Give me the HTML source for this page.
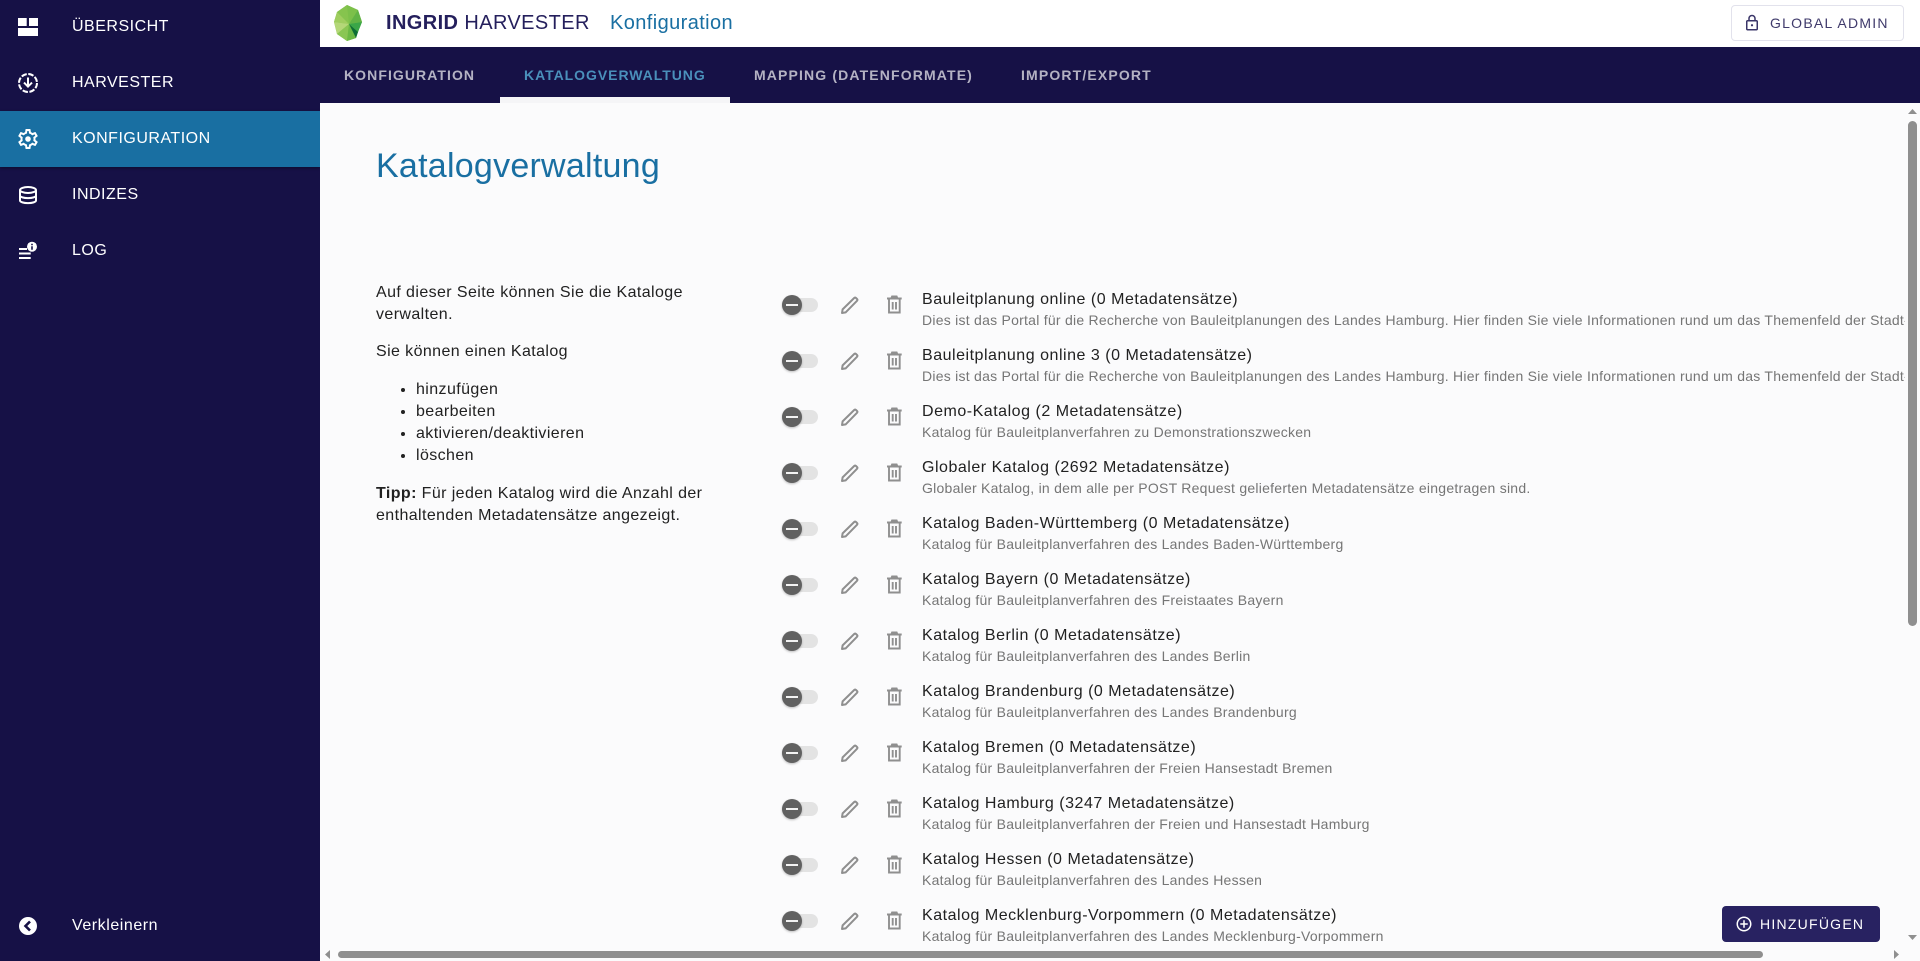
<!DOCTYPE html>
<html lang="de">
<head>
<meta charset="utf-8">
<title>InGrid Harvester</title>
<style>
*{box-sizing:border-box}
html,body{margin:0;padding:0;width:1920px;height:961px;overflow:hidden;background:#fbfbfc;font-family:"Liberation Sans",Arial,sans-serif;color:#212121}
.abs{position:absolute}
#side{position:absolute;left:0;top:0;width:320px;height:961px;background:#161146}
.nav{position:absolute;left:0;width:320px;height:56px;color:#fff;font-size:16px;line-height:56px;padding-left:72px;letter-spacing:.5px;white-space:nowrap}
.nav svg{position:absolute;left:16px;top:16px;width:24px;height:24px;fill:#fff}
.nav.on{background:#196fa2;box-shadow:0 1px 3px rgba(0,0,0,.35)}
#head{position:absolute;left:320px;top:0;width:1600px;height:47px;background:#fff}
#brand{position:absolute;left:66px;top:0;line-height:47px;font-size:20px;letter-spacing:.4px;color:#241f5c;white-space:nowrap}
#crumb{position:absolute;left:290px;top:0;line-height:47px;font-size:20px;letter-spacing:.4px;color:#196fa2;white-space:nowrap}
#admin{position:absolute;left:1411px;top:5px;width:173px;height:36px;border:1px solid #e2e2ec;border-radius:4px;background:#fff;color:#3f3a6b;font-size:14px;letter-spacing:1.25px;line-height:34px;padding-left:38px;white-space:nowrap}
#admin svg{position:absolute;left:11px;top:8px;width:18px;height:18px;fill:#3a3568}
#tabs{position:absolute;left:320px;top:47px;width:1600px;height:56px;background:#161146}
.tab{position:absolute;top:0;line-height:56px;font-size:14px;font-weight:bold;color:rgba(255,255,255,.68);white-space:nowrap}
#ind{position:absolute;left:180px;top:50px;width:230px;height:6px;background:#f5f5f7}
#main{position:absolute;left:320px;top:103px;width:1600px;height:858px;background:#fbfbfc;overflow:hidden}
h1{position:absolute;left:56px;top:43px;margin:0;font-size:34px;line-height:40px;font-weight:normal;color:#196fa2;letter-spacing:.25px;white-space:nowrap}
#intro{position:absolute;left:56px;top:179px;width:340px;font-size:16px;line-height:22px;color:#212121;letter-spacing:.4px}
#intro p{margin:0 0 15px}
#intro ul{margin:0 0 16px;padding-left:40px}
.row{position:absolute;left:0;width:1600px;height:56px}
.tr{position:absolute;left:462px;top:15px;width:36px;height:14px;border-radius:7px;background:#e3e3e3}
.th{position:absolute;left:462px;top:12px;width:20px;height:20px;border-radius:50%;background:#616161;box-shadow:0 1px 2px rgba(0,0,0,.25)}
.th:after{content:"";position:absolute;left:4px;top:9px;width:12px;height:2px;background:#f2f2f2}
.ed{position:absolute;left:518px;top:10px;width:24px;height:24px}
.de{position:absolute;left:562px;top:10px;width:24px;height:24px}
.t1{position:absolute;left:602px;top:7px;font-size:16px;line-height:20px;letter-spacing:.52px;color:#212121;white-space:nowrap}
.t2{position:absolute;left:602px;top:28px;width:983px;overflow:hidden;font-size:14px;line-height:18px;letter-spacing:.25px;color:#757575;white-space:nowrap}
#add{position:absolute;left:1722px;top:906px;width:158px;height:36px;border-radius:4px;background:#282261;color:#fff;font-size:14px;letter-spacing:1.25px;line-height:36px;padding-left:38px;white-space:nowrap}
#add svg{position:absolute;left:13px;top:9px;width:18px;height:18px;fill:#fff}
.sb{position:absolute;background:#8f8f8f}
</style>
</head>
<body>
<svg width="0" height="0" style="position:absolute">
  <symbol id="pen" viewBox="0 0 24 24"><path d="M4 20l.6-3.600L16.200 5a1.300 1.300 0 0 1 1.800 0l1 1a1.300 1.300 0 0 1 0 1.800L7.600 19.400z" fill="none" stroke="#8f8f8f" stroke-width="2" stroke-linejoin="round"/></symbol>
  <symbol id="bin" viewBox="0 0 24 24"><path d="M5 5.500h14.700M9.500 5l.6-1.500h4.500l.6 1.500M7 6v13.500h10.700V6M10.700 9v7.500M14 9v7.500" fill="none" stroke="#8f8f8f" stroke-width="1.900"/></symbol>
</svg>

<div id="side">
  <div class="nav" style="top:-1px">ÜBERSICHT
    <svg viewBox="0 0 24 24" style="top:17px"><path d="M2 2h8.700v8H2zM13 2h9v8h-9zM2 12h20v8H2z"/></svg></div>
  <div class="nav" style="top:55px">HARVESTER
    <svg viewBox="0 0 24 24"><circle cx="12" cy="12" r="9" fill="none" stroke="#fff" stroke-width="2" stroke-dasharray="5.500 1.570"/><path d="M11 6.500h2v6.700l2.300-2.300 1.400 1.400-4.700 4.700-4.700-4.700 1.400-1.400 2.300 2.300z"/></svg></div>
  <div class="nav on" style="top:111px">KONFIGURATION
    <svg viewBox="0 0 24 24"><path d="M19.43 12.98c.04-.32.07-.64.07-.98 0-.34-.03-.66-.07-.98l2.11-1.65c.19-.15.24-.42.12-.64l-2-3.46c-.09-.16-.26-.25-.44-.25-.06 0-.12.01-.17.03l-2.49 1c-.52-.4-1.08-.73-1.69-.98l-.38-2.65C14.46 2.18 14.25 2 14 2h-4c-.25 0-.46.18-.49.42l-.38 2.65c-.61.25-1.17.59-1.69.98l-2.49-1c-.06-.02-.12-.03-.18-.03-.17 0-.34.09-.43.25l-2 3.46c-.13.22-.07.49.12.64l2.11 1.65c-.04.32-.07.65-.07.98 0 .33.03.66.07.98l-2.11 1.65c-.19.15-.24.42-.12.64l2 3.46c.09.16.26.25.44.25.06 0 .12-.01.17-.03l2.49-1c.52.4 1.08.73 1.69.98l.38 2.65c.03.24.24.42.49.42h4c.25 0 .46-.18.49-.42l.38-2.65c.61-.25 1.17-.59 1.69-.98l2.49 1c.06.02.12.03.18.03.17 0 .34-.09.43-.25l2-3.46c.12-.22.07-.49-.12-.64l-2.11-1.65zm-1.98-1.71c.04.31.05.52.05.73 0 .21-.02.43-.05.73l-.14 1.13.89.7 1.08.84-.7 1.21-1.27-.51-1.04-.42-.9.68c-.43.32-.84.56-1.25.73l-1.06.43-.16 1.13-.2 1.35h-1.4l-.19-1.35-.16-1.13-1.06-.43c-.43-.18-.83-.41-1.23-.71l-.91-.7-1.06.43-1.27.51-.7-1.21 1.08-.84.89-.7-.14-1.13c-.03-.31-.05-.54-.05-.74s.02-.43.05-.73l.14-1.13-.89-.7-1.08-.84.7-1.21 1.27.51 1.04.42.9-.68c.43-.32.84-.56 1.25-.73l1.06-.43.16-1.13.2-1.35h1.39l.19 1.35.16 1.13 1.06.43c.43.18.83.41 1.23.71l.91.7 1.06-.43 1.27-.51.7 1.21-1.07.85-.89.7.14 1.13zM12 9.200a2.800 2.800 0 1 0 0 5.600 2.800 2.800 0 0 0 0-5.600z"/></svg></div>
  <div class="nav" style="top:167px">INDIZES
    <svg viewBox="0 0 24 24"><g fill="none" stroke="#fff" stroke-width="2"><ellipse cx="12" cy="7" rx="8" ry="3"/><path d="M4 7v10.500c0 1.500 3.600 2.600 8 2.600s8-1.100 8-2.600V7M4 12.500c0 1.500 3.600 2.600 8 2.600s8-1.100 8-2.600"/></g></svg></div>
  <div class="nav" style="top:223px">LOG
    <svg viewBox="0 0 24 24"><path d="M3 9h8v2H3zM3 13.500h11.700v2H3zM3 18h11.700v2H3z"/><circle cx="16" cy="7.700" r="5"/><path d="M15.200 7.200h1.600v3.600h-1.600zM15.200 4.800h1.600v1.500h-1.600z" fill="#161146"/></svg></div>
  <div class="nav" style="top:898px;letter-spacing:.55px">Verkleinern
    <svg viewBox="0 0 24 24"><path d="M12 3a9 9 0 1 0 0 18 9 9 0 0 0 0-18z"/><path d="M14 7.500l-4.500 4.500 4.500 4.500" fill="none" stroke="#161146" stroke-width="2.600"/></svg></div>
</div>

<div id="head">
  <svg class="abs" style="left:14px;top:5px" width="28" height="36" viewBox="0 0 28 36">
    <polygon points="13,0 24,5 28,17 24,27 22,33 13,36 3,29 0,17 3,7" fill="#7cc04a"/>
    <polygon points="13,0 24,5 15,19" fill="#7cc04a"/>
    <polygon points="24,5 28,17 15,19" fill="#62b345"/>
    <polygon points="3,7 13,0 15,19" fill="#86c44e"/>
    <polygon points="0,17 3,7 15,19" fill="#9fcd5f"/>
    <polygon points="0,17 15,19 3,29" fill="#b4d778"/>
    <polygon points="3,29 15,19 13,36" fill="#8ac653"/>
    <polygon points="13,36 15,19 22,33" fill="#6cb944"/>
    <polygon points="15,19 28,17 24,27" fill="#3aa648"/>
    <polygon points="15,19 24,27 22,33" fill="#0d6e35"/>
  </svg>
  <div id="brand"><b>INGRID</b> HARVESTER</div>
  <div id="crumb">Konfiguration</div>
  <div id="admin"><svg viewBox="0 0 24 24"><path d="M18 8h-1V6c0-2.760-2.240-5-5-5S7 3.240 7 6v2H6c-1.100 0-2 .9-2 2v10c0 1.100.9 2 2 2h12c1.100 0 2-.9 2-2V10c0-1.100-.9-2-2-2zM9 6c0-1.660 1.340-3 3-3s3 1.340 3 3v2H9V6zm9 14H6V10h12v10zm-6-3.500a1.500 1.500 0 1 0 0-3 1.500 1.500 0 0 0 0 3z"/></svg>GLOBAL ADMIN</div>
</div>

<div id="tabs">
  <div class="tab" style="left:24px;letter-spacing:1.07px">KONFIGURATION</div>
  <div class="tab" style="left:204px;letter-spacing:.96px;color:#4a90bb">KATALOGVERWALTUNG</div>
  <div class="tab" style="left:434px;letter-spacing:1.14px">MAPPING (DATENFORMATE)</div>
  <div class="tab" style="left:701px;letter-spacing:1.15px">IMPORT/EXPORT</div>
  <div id="ind"></div>
</div>

<div id="main">
  <h1>Katalogverwaltung</h1>
  <div id="intro">
    <p>Auf dieser Seite können Sie die Kataloge verwalten.</p>
    <p style="margin-bottom:16px">Sie können einen Katalog</p>
    <ul><li>hinzufügen</li><li>bearbeiten</li><li>aktivieren/deaktivieren</li><li>löschen</li></ul>
    <p><b>Tipp:</b> Für jeden Katalog wird die Anzahl der enthaltenden Metadatensätze angezeigt.</p>
  </div>

  <div class="row" style="top:180px"><div class="tr"></div><div class="th"></div><svg class="ed"><use href="#pen"/></svg><svg class="de"><use href="#bin"/></svg><div class="t1">Bauleitplanung online (0 Metadatensätze)</div><div class="t2">Dies ist das Portal für die Recherche von Bauleitplanungen des Landes Hamburg. Hier finden Sie viele Informationen rund um das Themenfeld der Stadt- und Landschaftsplanung in Hamburg.</div></div>
  <div class="row" style="top:236px"><div class="tr"></div><div class="th"></div><svg class="ed"><use href="#pen"/></svg><svg class="de"><use href="#bin"/></svg><div class="t1">Bauleitplanung online 3 (0 Metadatensätze)</div><div class="t2">Dies ist das Portal für die Recherche von Bauleitplanungen des Landes Hamburg. Hier finden Sie viele Informationen rund um das Themenfeld der Stadt- und Landschaftsplanung in Hamburg.</div></div>
  <div class="row" style="top:292px"><div class="tr"></div><div class="th"></div><svg class="ed"><use href="#pen"/></svg><svg class="de"><use href="#bin"/></svg><div class="t1">Demo-Katalog (2 Metadatensätze)</div><div class="t2">Katalog für Bauleitplanverfahren zu Demonstrationszwecken</div></div>
  <div class="row" style="top:348px"><div class="tr"></div><div class="th"></div><svg class="ed"><use href="#pen"/></svg><svg class="de"><use href="#bin"/></svg><div class="t1">Globaler Katalog (2692 Metadatensätze)</div><div class="t2">Globaler Katalog, in dem alle per POST Request gelieferten Metadatensätze eingetragen sind.</div></div>
  <div class="row" style="top:404px"><div class="tr"></div><div class="th"></div><svg class="ed"><use href="#pen"/></svg><svg class="de"><use href="#bin"/></svg><div class="t1">Katalog Baden-Württemberg (0 Metadatensätze)</div><div class="t2">Katalog für Bauleitplanverfahren des Landes Baden-Württemberg</div></div>
  <div class="row" style="top:460px"><div class="tr"></div><div class="th"></div><svg class="ed"><use href="#pen"/></svg><svg class="de"><use href="#bin"/></svg><div class="t1">Katalog Bayern (0 Metadatensätze)</div><div class="t2">Katalog für Bauleitplanverfahren des Freistaates Bayern</div></div>
  <div class="row" style="top:516px"><div class="tr"></div><div class="th"></div><svg class="ed"><use href="#pen"/></svg><svg class="de"><use href="#bin"/></svg><div class="t1">Katalog Berlin (0 Metadatensätze)</div><div class="t2">Katalog für Bauleitplanverfahren des Landes Berlin</div></div>
  <div class="row" style="top:572px"><div class="tr"></div><div class="th"></div><svg class="ed"><use href="#pen"/></svg><svg class="de"><use href="#bin"/></svg><div class="t1">Katalog Brandenburg (0 Metadatensätze)</div><div class="t2">Katalog für Bauleitplanverfahren des Landes Brandenburg</div></div>
  <div class="row" style="top:628px"><div class="tr"></div><div class="th"></div><svg class="ed"><use href="#pen"/></svg><svg class="de"><use href="#bin"/></svg><div class="t1">Katalog Bremen (0 Metadatensätze)</div><div class="t2">Katalog für Bauleitplanverfahren der Freien Hansestadt Bremen</div></div>
  <div class="row" style="top:684px"><div class="tr"></div><div class="th"></div><svg class="ed"><use href="#pen"/></svg><svg class="de"><use href="#bin"/></svg><div class="t1">Katalog Hamburg (3247 Metadatensätze)</div><div class="t2">Katalog für Bauleitplanverfahren der Freien und Hansestadt Hamburg</div></div>
  <div class="row" style="top:740px"><div class="tr"></div><div class="th"></div><svg class="ed"><use href="#pen"/></svg><svg class="de"><use href="#bin"/></svg><div class="t1">Katalog Hessen (0 Metadatensätze)</div><div class="t2">Katalog für Bauleitplanverfahren des Landes Hessen</div></div>
  <div class="row" style="top:796px"><div class="tr"></div><div class="th"></div><svg class="ed"><use href="#pen"/></svg><svg class="de"><use href="#bin"/></svg><div class="t1">Katalog Mecklenburg-Vorpommern (0 Metadatensätze)</div><div class="t2">Katalog für Bauleitplanverfahren des Landes Mecklenburg-Vorpommern</div></div>
</div>

<!-- scrollbars -->
<div class="abs" style="left:320px;top:945px;width:1585px;height:16px;background:#fbfbfc"></div>
<div class="abs" style="left:1905px;top:103px;width:15px;height:858px;background:#fbfbfc"></div>
<div class="sb" style="left:1908px;top:121px;width:9px;height:505px;border-radius:4.5px"></div>
<div class="sb" style="left:338px;top:950.7px;width:1425px;height:7.6px;border-radius:4px"></div>
<svg class="abs" style="left:1907px;top:108px" width="11" height="7"><polygon points="5.500,1 10,6 1,6" fill="#8f8f8f"/></svg>
<svg class="abs" style="left:1907px;top:934px" width="11" height="7"><polygon points="1,1 10,1 5.500,6" fill="#8f8f8f"/></svg>
<svg class="abs" style="left:324px;top:949px" width="7" height="11"><polygon points="6,1 6,10 1,5.500" fill="#8f8f8f"/></svg>
<svg class="abs" style="left:1893px;top:949px" width="7" height="11"><polygon points="1,1 1,10 6,5.500" fill="#8f8f8f"/></svg>

<div id="add"><svg viewBox="0 0 24 24"><path d="M13 7h-2v4H7v2h4v4h2v-4h4v-2h-4V7zm-1-5C6.480 2 2 6.480 2 12s4.480 10 10 10 10-4.480 10-10S17.520 2 12 2zm0 18c-4.410 0-8-3.590-8-8s3.590-8 8-8 8 3.590 8 8-3.590 8-8 8z"/></svg>HINZUFÜGEN</div>
</body>
</html>
